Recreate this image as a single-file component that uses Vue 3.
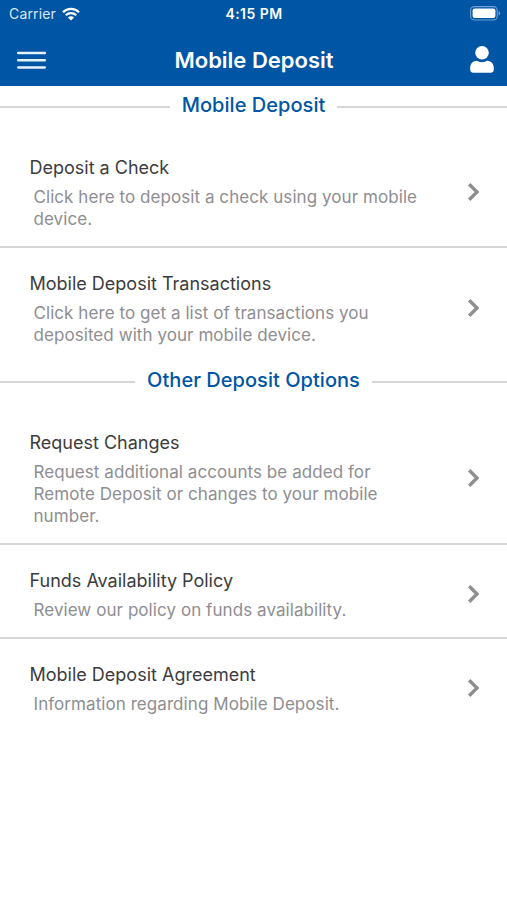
<template>
  <div class="screen">
    <header class="header">
      <div class="status">
        <div class="carrier">
          <span>Carrier</span>
          <svg class="wifi" width="18" height="14" viewBox="0 0 18 14">
            <path d="M1 5.200a11.400 11.400 0 0 1 16 0M3.800 8.200a7.400 7.400 0 0 1 10.400 0" fill="none" stroke="#fff" stroke-width="2.200" />
            <path d="M9 13.600L5.900 10.500a4.400 4.400 0 0 1 6.200 0z" fill="#fff" />
          </svg>
        </div>
        <span class="time">4:15 PM</span>
        <svg class="battery" width="31" height="15" viewBox="0 0 31 15">
          <rect x="0.6" y="0.6" width="26.600" height="13.400" rx="3.800" fill="none" stroke="#6f9fd2" stroke-width="1.100" />
          <rect x="2.600" y="2.500" width="22.800" height="9.600" rx="2" fill="#fff" />
          <path d="M28.600 5v4.600c1-.4 1.600-1.300 1.600-2.300s-.6-1.900-1.600-2.300z" fill="#6f9fd2" />
        </svg>
      </div>
      <nav class="nav">
        <svg class="menu" width="29" height="18" viewBox="0 0 29 18">
          <path d="M1.200 2h26.600M1.200 9.200h26.600M1.200 16.400h26.600" stroke="#e6f2fc" stroke-width="2.500" stroke-linecap="round" />
        </svg>
        <h1>Mobile Deposit</h1>
        <svg class="user" width="24" height="27" viewBox="0 0 24 27">
          <circle cx="12" cy="6.800" r="6.800" fill="#fff" />
          <path d="M6.800 14.800c1.500.9 3.200 1.400 5.200 1.400s3.700-.5 5.200-1.400c4.200.2 6.600 3.200 6.600 7.200v1.800c0 1.700-1.200 2.900-2.900 2.900H3.100C1.400 26.700.2 25.500.2 23.800V22c0-4 2.400-7 6.600-7.200z" fill="#fff" />
        </svg>
      </nav>
    </header>

    <section v-for="section in sections" :key="section.title" class="section">
      <h2><span>{{ section.title }}</span></h2>
      <a v-for="item in section.items" :key="item.title" class="row">
        <div class="text">
          <h3>{{ item.title }}</h3>
          <p><span v-for="line in item.lines" :key="line">{{ line }}</span></p>
        </div>
        <svg class="chevron" width="13" height="20" viewBox="0 0 13 20">
          <path d="M2.200 2.200L10 10l-7.800 7.800" fill="none" stroke="#8e8e90" stroke-width="3.400" />
        </svg>
      </a>
    </section>
  </div>
</template>

<script setup>
const sections = [
  {
    title: 'Mobile Deposit',
    items: [
      { title: 'Deposit a Check', lines: ['Click here to deposit a check using your mobile', 'device.'] },
      { title: 'Mobile Deposit Transactions', lines: ['Click here to get a list of transactions you', 'deposited with your mobile device.'] }
    ]
  },
  {
    title: 'Other Deposit Options',
    items: [
      { title: 'Request Changes', lines: ['Request additional accounts be added for', 'Remote Deposit or changes to your mobile', 'number.'] },
      { title: 'Funds Availability Policy', lines: ['Review our policy on funds availability.'] },
      { title: 'Mobile Deposit Agreement', lines: ['Information regarding Mobile Deposit.'] }
    ]
  }
]
</script>

<style>
body {
  background: #fff;
}
</style>

<style scoped>
.screen {
  min-height: 900px;
  font-family: Inter, "Liberation Sans", sans-serif;
  background: #fff;
}
h1, h2, h3, p {
  margin: 0;
  font-weight: 400;
}
.header {
  height: 86px;
  margin-bottom: 1px;
  background: #0055a5;
  color: #fff;
}
.status {
  display: grid;
  grid-template-columns: 1fr auto 1fr;
  align-items: center;
  height: 27px;
  padding: 0 6px 0 9px;
  font-size: 14px;
}
.carrier {
  display: flex;
  align-items: center;
  gap: 6px;
  color: #d9e8f8;
  letter-spacing: 0.15px;
}
.time {
  margin-right: 2px;
  font-weight: 600;
  letter-spacing: 0.45px;
}
.battery {
  justify-self: end;
}
.nav {
  display: grid;
  grid-template-columns: 1fr auto 1fr;
  align-items: center;
  height: 66px;
  padding: 0 13px 0 17px;
  margin-top: -0.5px;
}
.nav h1 {
  margin-right: 3px;
  font-size: 22px;
  font-weight: 600;
}
.user {
  justify-self: end;
}
h2 {
  display: flex;
  align-items: center;
  gap: 12px;
  height: 45px;
  padding-bottom: 5px;
  box-sizing: border-box;
  color: #0055a5;
  font-size: 20px;
  font-weight: 500;
}
h2 span {
  padding-bottom: 5px;
  letter-spacing: 0.04px;
}
h2::before,
h2::after {
  content: "";
  flex: 1;
  height: 2px;
  background: #d6d6d6;
}
.row {
  display: flex;
  align-items: center;
  justify-content: space-between;
  padding: 25px 27px 16px 29.5px;
  border-bottom: 2px solid #d6d6d6;
}
.row:last-child {
  border-bottom: 0;
}
.chevron {
  margin-bottom: 4px;
}
h3 {
  color: #3c3c3e;
  font-size: 18px;
  line-height: 22px;
}
p {
  padding: 7px 0 0 4px;
  color: #8e8e92;
  font-size: 17px;
  line-height: 22px;
  letter-spacing: 0.065px;
}
p span {
  display: block;
  white-space: nowrap;
}
</style>
